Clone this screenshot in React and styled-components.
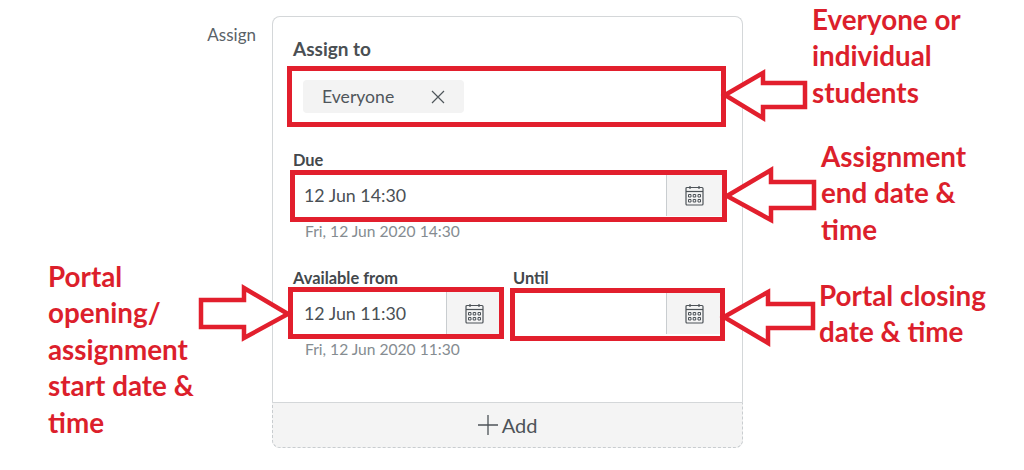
import React from "react";
import styled, { createGlobalStyle } from "styled-components";

const GlobalStyle = createGlobalStyle`
  html, body {
    margin: 0;
    padding: 0;
    background: #fff;
    font-family: Lato, "Liberation Sans", sans-serif;
    overflow: hidden;
  }
`;

const Page = styled.div`
  position: relative;
  width: 1024px;
  height: 470px;
  overflow: hidden;
`;

const Row = styled.div`
  display: flex;
  align-items: flex-start;
  padding-top: 16px;
`;

const RowLabel = styled.div`
  width: 272px;
  padding: 9px 16px 0 0;
  box-sizing: border-box;
  text-align: right;
  font-size: 17px;
  line-height: 20px;
  color: #5a6268;
`;

const Card = styled.div`
  width: 471px;
  height: 432px;
  box-sizing: border-box;
  display: flex;
  flex-direction: column;
  border: 1px solid #d4d7d9;
  border-bottom: 0;
  border-radius: 8px;
`;

const CardBody = styled.div`
  flex: 1;
  padding: 21px 20px 0;
`;

const Heading = styled.div`
  font-size: 19px;
  font-weight: 700;
  line-height: 22px;
  color: #4a4f53;
`;

const TagBox = styled.div`
  display: flex;
  margin: 20px 0 0 10px;
  height: 33px;
`;

const Chip = styled.div`
  display: flex;
  align-items: center;
  justify-content: space-between;
  width: 161px;
  box-sizing: border-box;
  padding: 0 19px;
  border-radius: 4px;
  background: #f3f3f3;
  font-size: 17.6px;
  color: #4f565b;
`;

const Stack = styled.div`
  display: flex;
  flex-direction: column;
  margin-top: ${(p) => p.$top}px;
`;

const Columns = styled.div`
  display: flex;
  gap: 11px;
  margin-top: 29px;
`;

const Column = styled.div`
  width: ${(p) => p.$width}px;
`;

const FieldLabel = styled.div`
  font-size: 16.4px;
  font-weight: 700;
  line-height: 18px;
  color: #43484c;
`;

const Input = styled.div`
  display: flex;
  align-items: stretch;
  height: 42px;
  margin-top: 5px;
`;

const InputValue = styled.div`
  flex: 1;
  display: flex;
  align-items: center;
  padding-left: 11px;
  font-size: 17.8px;
  color: #4a5055;
`;

const CalendarButton = styled.div`
  width: 55px;
  display: flex;
  align-items: center;
  justify-content: center;
  background: #f4f4f4;
  border-left: 1px solid #c9cdd0;
`;

const Hint = styled.div`
  margin: 6px 0 0 12px;
  font-size: 15.6px;
  line-height: 18px;
  color: #858c91;
`;

const AddBar = styled.div`
  height: 46px;
  box-sizing: border-box;
  margin: 0 -1px;
  display: flex;
  align-items: center;
  justify-content: center;
  gap: 4px;
  background: #f4f4f4;
  border: 1px dashed #c9cdd0;
  border-top: 1px solid #d4d7d9;
  border-radius: 0 0 8px 8px;
  font-size: 20px;
  color: #4d5358;
`;

const Frame = styled.div`
  position: absolute;
  left: ${(p) => p.$x}px;
  top: ${(p) => p.$y}px;
  width: ${(p) => p.$w}px;
  height: ${(p) => p.$h}px;
  box-sizing: border-box;
  border: 5px solid #e21f2d;
`;

const Note = styled.div`
  position: absolute;
  left: ${(p) => p.$x}px;
  top: ${(p) => p.$y}px;
  font-size: 27.8px;
  font-weight: 700;
  line-height: 36.4px;
  color: #dc1f2c;
  white-space: pre;
`;

const ArrowLayer = styled.svg`
  position: absolute;
  inset: 0;
  width: 1024px;
  height: 470px;
  pointer-events: none;
`;

const arrows = [
  "M725 95 L763 73 V83 H805 V107 H763 V118 Z",
  "M727 196 L771 170 V182 H814 V208 H771 V220 Z",
  "M724 317 L768 292 V304 H813 V328 H768 V343 Z",
  "M288 314 L244 288 V300 H201 V327 H244 V338 Z",
];

const frames = [
  { x: 287, y: 66, w: 439, h: 61 },
  { x: 290, y: 170, w: 437, h: 52 },
  { x: 288, y: 287, w: 216, h: 52 },
  { x: 510, y: 288, w: 215, h: 53 },
];

const notes = [
  { x: 812, y: 2, text: "Everyone or\nindividual\nstudents" },
  { x: 821, y: 139, text: "Assignment\nend date &\ntime" },
  { x: 819, y: 278, text: "Portal closing\ndate & time" },
  { x: 48, y: 259, text: "Portal\nopening/\nassignment\nstart date &\ntime" },
];

const CalendarIcon = () => (
  <svg width="19" height="21" viewBox="0 0 19 21" fill="none" stroke="#4d5358">
    <rect x="1" y="2.5" width="17" height="17.5" rx="1" strokeWidth="1.2" />
    <path d="M1 6.5H18" strokeWidth="1.2" />
    <path d="M5 1V4M14 1V4" strokeWidth="1.2" />
    <path
      d="M3.5 9.5h2.5v2.5h-2.5zM8.2 9.5h2.5v2.5h-2.5zM13 9.5h2.5v2.5H13zM3.5 14.5h2.5v2.5h-2.5zM8.2 14.5h2.5v2.5h-2.5zM13 14.5h2.5v2.5H13z"
      strokeWidth="1"
    />
  </svg>
);

const CloseIcon = () => (
  <svg width="14" height="14" viewBox="0 0 14 14" fill="none">
    <path d="M1 1L13 13M13 1L1 13" stroke="#4f565b" strokeWidth="1.2" />
  </svg>
);

const PlusIcon = () => (
  <svg width="20" height="20" viewBox="0 0 20 20" fill="none">
    <path d="M10 0V20M0 10H20" stroke="#4d5358" strokeWidth="1.3" />
  </svg>
);

const DateField = ({ value }) => (
  <Input>
    <InputValue>{value}</InputValue>
    <CalendarButton>
      <CalendarIcon />
    </CalendarButton>
  </Input>
);

const App = () => {
  return (
    <Page>
      <GlobalStyle />
      <Row>
        <RowLabel>Assign</RowLabel>
        <Card>
          <CardBody>
            <Heading>Assign to</Heading>
            <TagBox>
              <Chip>
                Everyone
                <CloseIcon />
              </Chip>
            </TagBox>
            <Stack $top={38}>
              <FieldLabel>Due</FieldLabel>
              <DateField value="12 Jun 14:30" />
              <Hint>Fri, 12 Jun 2020 14:30</Hint>
            </Stack>
            <Columns>
              <Column $width={209}>
                <FieldLabel>Available from</FieldLabel>
                <DateField value="12 Jun 11:30" />
                <Hint>Fri, 12 Jun 2020 11:30</Hint>
              </Column>
              <Column $width={209}>
                <FieldLabel>Until</FieldLabel>
                <DateField value="" />
              </Column>
            </Columns>
          </CardBody>
          <AddBar>
            <PlusIcon />
            Add
          </AddBar>
        </Card>
      </Row>
      {frames.map((f) => (
        <Frame key={f.x + "-" + f.y} $x={f.x} $y={f.y} $w={f.w} $h={f.h} />
      ))}
      <ArrowLayer viewBox="0 0 1024 470">
        {arrows.map((d) => (
          <path key={d} d={d} fill="#fff" stroke="#e21f2d" strokeWidth="4.5" strokeLinejoin="miter" />
        ))}
      </ArrowLayer>
      {notes.map((n) => (
        <Note key={n.text} $x={n.x} $y={n.y}>
          {n.text}
        </Note>
      ))}
    </Page>
  );
};

export default App;
